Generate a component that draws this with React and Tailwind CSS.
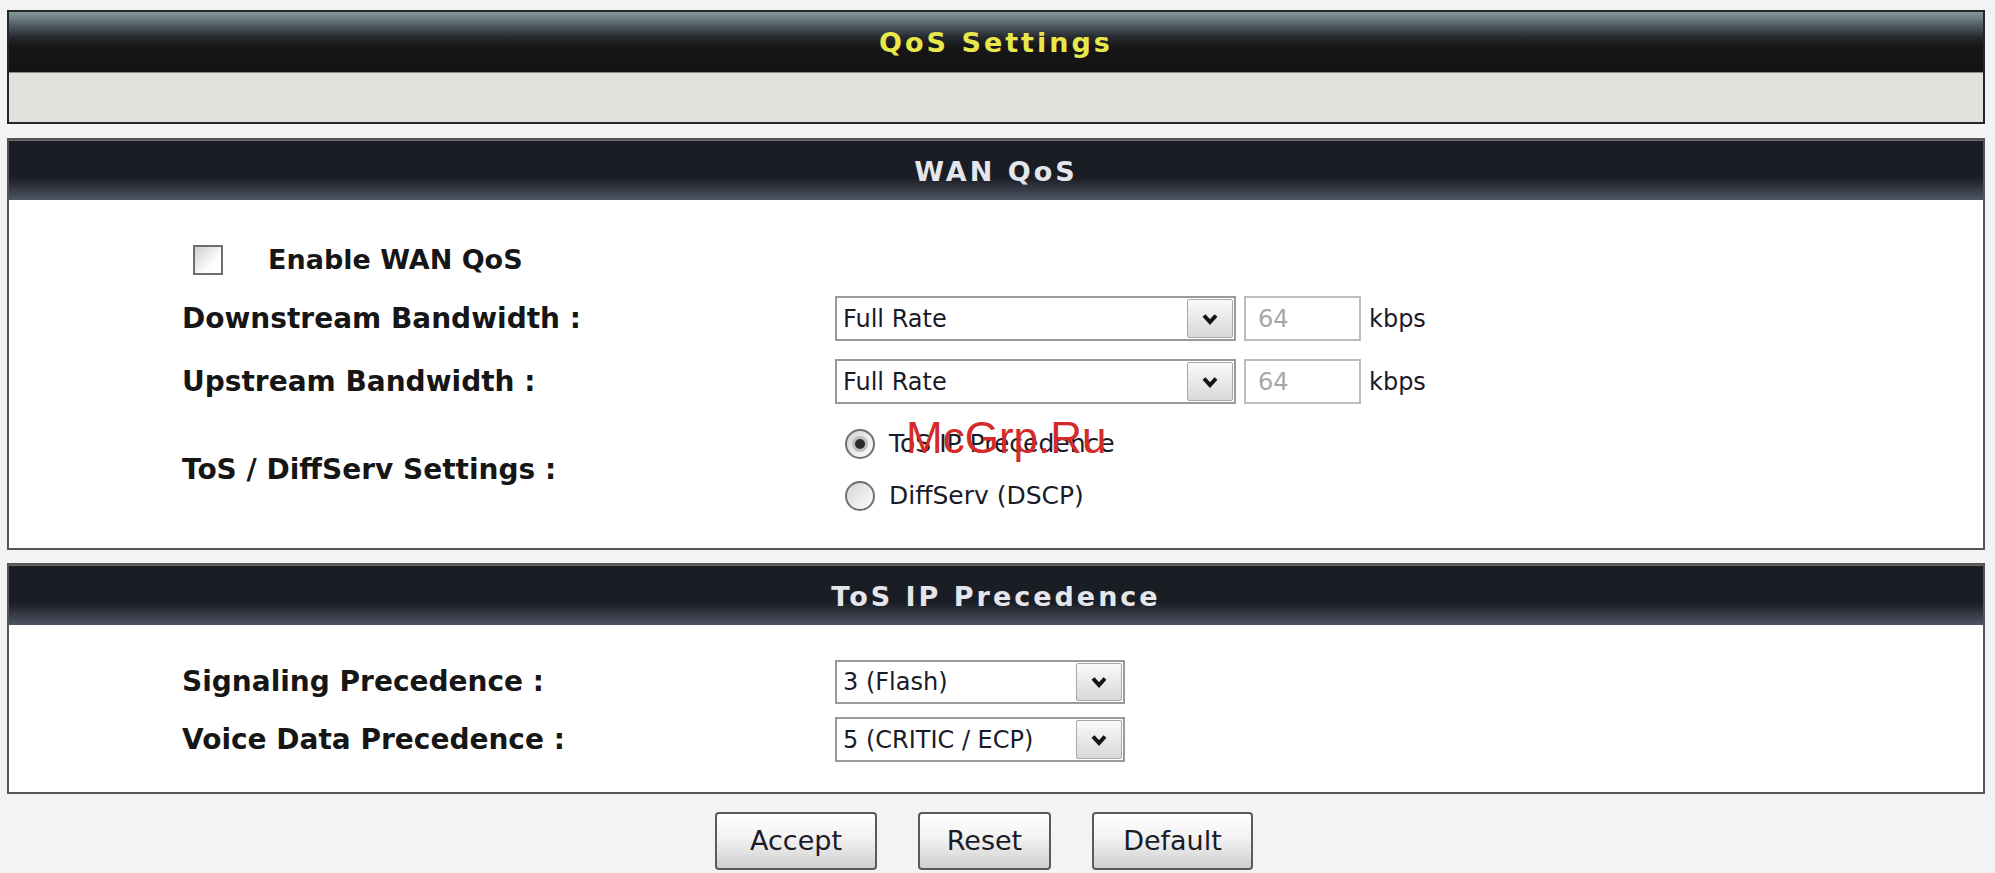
import React from "react";

function Chevron() {
  return (
    <svg width="16" height="12" viewBox="0 0 16 12">
      <polyline points="2,2.5 8,9 14,2.5" fill="none" stroke="#141414" strokeWidth="4" strokeLinejoin="miter" />
    </svg>
  );
}

function Select({ value, width }) {
  return (
    <div className={`flex items-stretch h-full ${width} border-2 border-[#9a9a9a] bg-white`}>
      <span className="flex-1 flex items-center pl-[6px] text-[24px] text-[#1a1a28] whitespace-nowrap overflow-hidden">{value}</span>
      <span className="w-[46px] flex items-center justify-center my-[1px] mr-[1px] border border-[#a8a8a8] rounded-[2px] bg-[linear-gradient(to_bottom,#fafafa,#d8d8d8)]">
        <Chevron />
      </span>
    </div>
  );
}

function Radio({ checked, label }) {
  return (
    <div className="flex items-center h-[30px]">
      <span className="w-[30px] h-[30px] rounded-full border-2 border-[#707070] bg-[linear-gradient(135deg,#d4d4d4,#ffffff)] flex items-center justify-center">
        {checked && <span className="w-[10px] h-[10px] rounded-full bg-[#2a2a2a] shadow-[0_0_0_3px_#bdbdbd]" />}
      </span>
      <span className="ml-[14px] text-[25px] text-[#1a1a28]">{label}</span>
    </div>
  );
}

function SectionHeader({ children }) {
  return (
    <div className="h-[60px] pt-[4px] flex items-center justify-center bg-[linear-gradient(to_bottom,#1b1d24_0%,#1b1d24_62%,#4f5565_100%)] border-t border-[#6a6a6a]">
      <span className="text-[27px] font-bold tracking-[3px] text-[#e4e6ec]">{children}</span>
    </div>
  );
}

const label = "w-[653px] text-[28px] font-bold text-[#161616]";

function Button({ children, width }) {
  return (
    <button className={`${width} h-[58px] border-2 border-[#5a5a5a] rounded-[4px] bg-[linear-gradient(to_bottom,#ffffff_0%,#f2f2f2_45%,#cfcfcf_100%)] text-[27px] text-[#1a1a28]`}>
      {children}
    </button>
  );
}

export default function App() {
  return (
    <div className="min-h-[873px] bg-[#f3f3f3] font-['DejaVu_Sans',Verdana,sans-serif] pt-[10px] pl-[7px] relative">
      <div className="w-[1978px] flex flex-col">
        {/* page title */}
        <div className="border-2 border-[#262626]">
          <div className="h-[60px] pt-[2px] flex items-center justify-center bg-[linear-gradient(to_bottom,#889a9f_0%,#5a6670_18%,#262a2f_42%,#161616_58%,#131313_100%)]">
            <span className="text-[27px] font-bold tracking-[3px] text-[#e8e84c]">QoS Settings</span>
          </div>
          <div className="h-[50px] bg-[#e2e1de] border-t border-[#8a8a8a]" />
        </div>

        {/* WAN QoS */}
        <div className="mt-[14px] border-2 border-[#555555] bg-white">
          <SectionHeader>WAN QoS</SectionHeader>
          <div className="pl-[173px] pt-[45px] pb-[37px] flex flex-col">
            <div className="h-[30px] flex items-center">
              <span className="ml-[11px] w-[30px] h-[30px] border-2 border-[#6e6e6e] bg-[linear-gradient(135deg,#d0d0d0,#ffffff_70%)]" />
              <span className="ml-[45px] text-[27px] font-bold text-[#161616]">Enable WAN QoS</span>
            </div>
            <div className="mt-[21px] h-[45px] flex items-center">
              <span className={label}>Downstream Bandwidth :</span>
              <Select value="Full Rate" width="w-[401px]" />
              <span className="ml-[8px] h-full w-[117px] border-2 border-[#bdbdbd] flex items-center pl-[12px] text-[24px] text-[#a6a6a6]">64</span>
              <span className="ml-[8px] text-[24px] text-[#1a1a28]">kbps</span>
            </div>
            <div className="mt-[18px] h-[45px] flex items-center">
              <span className={label}>Upstream Bandwidth :</span>
              <Select value="Full Rate" width="w-[401px]" />
              <span className="ml-[8px] h-full w-[117px] border-2 border-[#bdbdbd] flex items-center pl-[12px] text-[24px] text-[#a6a6a6]">64</span>
              <span className="ml-[8px] text-[24px] text-[#1a1a28]">kbps</span>
            </div>
            <div className="mt-[25px] flex items-center">
              <span className={label}>ToS / DiffServ Settings :</span>
              <div className="ml-[10px] flex flex-col gap-[22px]">
                <Radio checked label="ToS IP Precedence" />
                <Radio label="DiffServ (DSCP)" />
              </div>
            </div>
          </div>
        </div>

        {/* ToS IP Precedence */}
        <div className="mt-[13px] border-2 border-[#555555] bg-white">
          <SectionHeader>ToS IP Precedence</SectionHeader>
          <div className="pl-[173px] pt-[35px] pb-[30px] flex flex-col">
            <div className="h-[44px] flex items-center">
              <span className={label}>Signaling Precedence :</span>
              <Select value="3 (Flash)" width="w-[290px]" />
            </div>
            <div className="mt-[13px] h-[45px] flex items-center">
              <span className={label}>Voice Data Precedence :</span>
              <Select value="5 (CRITIC / ECP)" width="w-[290px]" />
            </div>
          </div>
        </div>

        <div className="mt-[18px] pr-[24px] flex justify-center gap-[41px]">
          <Button width="w-[162px]">Accept</Button>
          <Button width="w-[133px]">Reset</Button>
          <Button width="w-[161px]">Default</Button>
        </div>
      </div>

      {/* watermark */}
      <span className="absolute left-[906px] top-[416px] text-[44px] leading-none font-['Liberation_Sans',Arial,sans-serif] text-[#d42a2a]">McGrp.Ru</span>
    </div>
  );
}
